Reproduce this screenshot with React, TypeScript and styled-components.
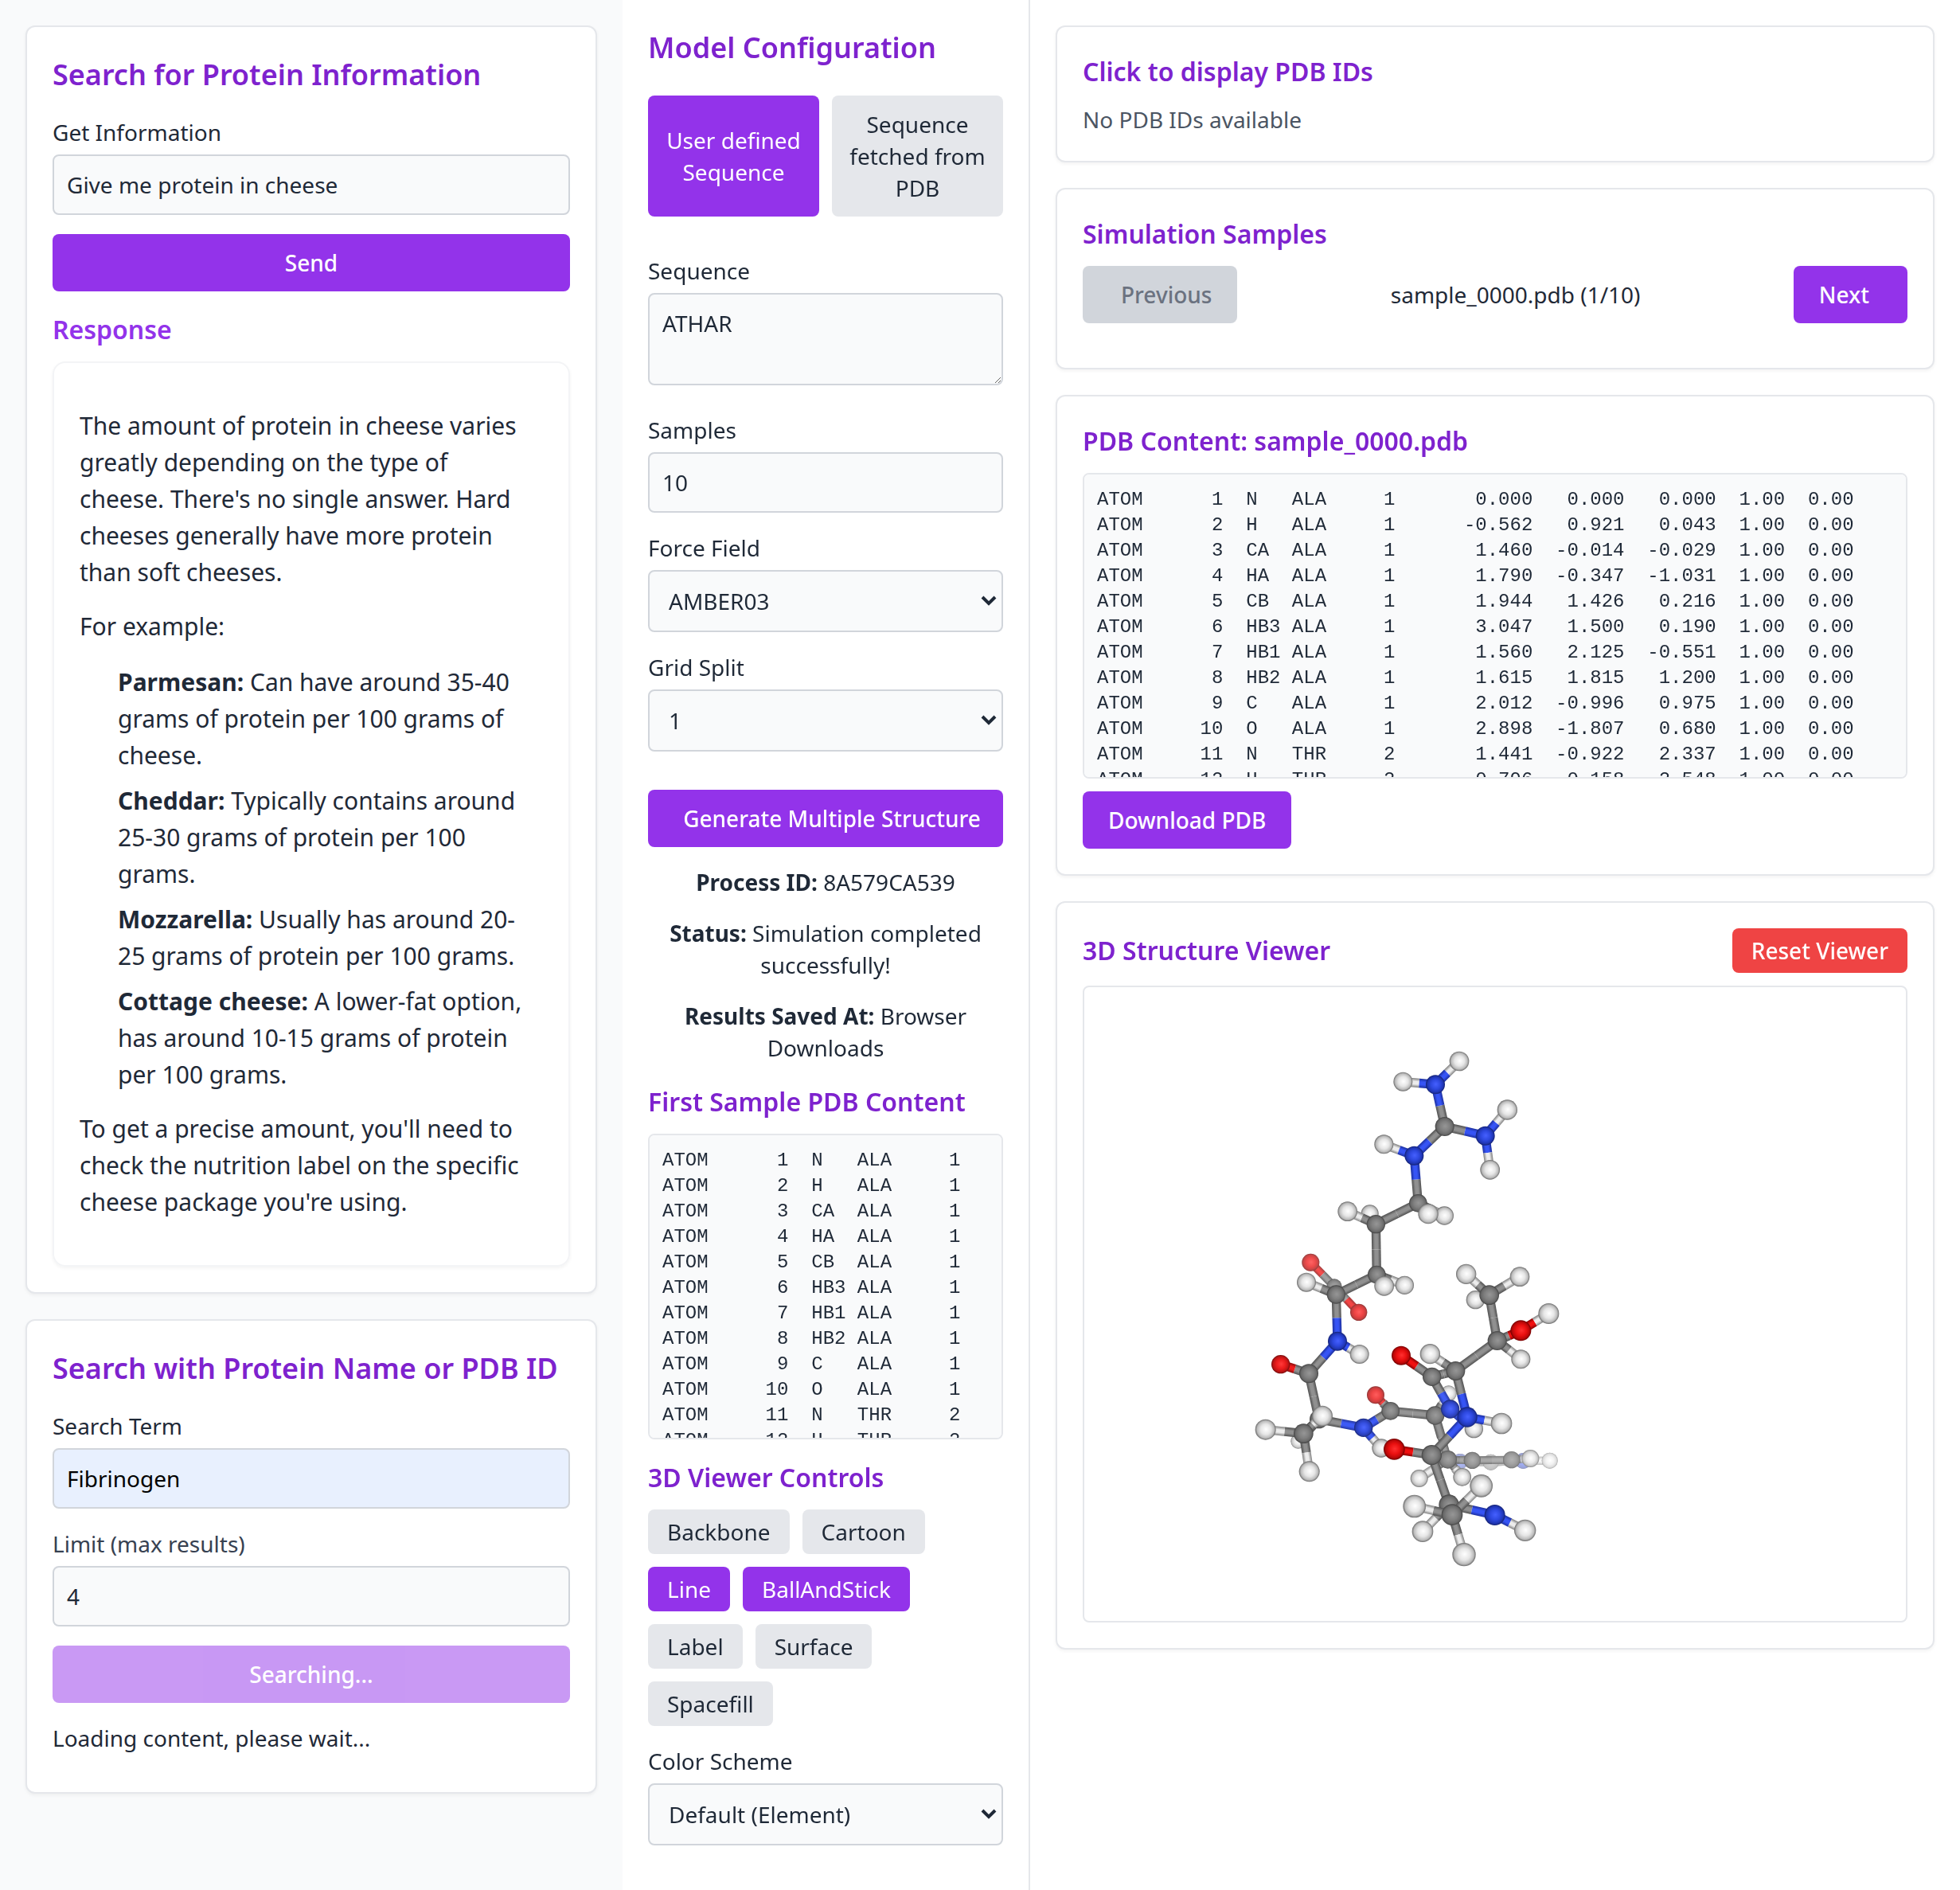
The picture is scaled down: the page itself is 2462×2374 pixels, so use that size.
import React, { useState } from "react";
import styled, { createGlobalStyle, css } from "styled-components";

const color = {
  ink: "#1f2937",
  inkSoft: "#374151",
  muted: "#4b5563",
  purple: "#9333ea",
  purpleDark: "#7e22ce",
  line: "#e5e7eb",
  lineStrong: "#d1d5db",
  lineSoft: "#f3f4f6",
  surface: "#f9fafb",
  red: "#ef4444",
};

const GlobalStyle = createGlobalStyle`
  *, *::before, *::after { box-sizing: border-box; }
  body {
    margin: 0;
    background: #fff;
    color: ${color.ink};
    font-family: "Noto Sans", "Open Sans", sans-serif;
    font-size: 28px;
    line-height: 40px;
  }
  h2, h3, p, ul, pre { margin: 0; padding: 0; }
  button, input, textarea, select { font: inherit; color: inherit; margin: 0; }
`;

const Page = styled.div`
  display: grid;
  grid-template-columns: minmax(0, 391fr) minmax(0, 256fr) minmax(0, 584fr);
  min-height: 100vh;
`;

const Column = styled.div<{ $tone?: "tinted" | "ruled" }>`
  padding: 32px;
  ${(p) => p.$tone === "tinted" && css`background: ${color.surface};`}
  ${(p) => p.$tone === "ruled" && css`border-right: 2px solid ${color.line};`}
`;

const CardColumn = styled(Column)`
  display: flex;
  flex-direction: column;
  gap: 32px;
`;

const Card = styled.section`
  padding: 32px;
  background: #fff;
  border: 2px solid ${color.line};
  border-radius: 12px;
  box-shadow: 0 2px 4px rgba(0, 0, 0, 0.05);
`;

const Title = styled.h2`
  margin-bottom: 24px;
  font-size: 36px;
  line-height: 56px;
  font-weight: 600;
  color: ${color.purpleDark};
`;

const Subtitle = styled.h3<{ $bright?: boolean }>`
  margin-bottom: 16px;
  font-size: 32px;
  line-height: 48px;
  font-weight: 600;
  color: ${(p) => (p.$bright ? color.purple : color.purpleDark)};
`;

const Field = styled.div`
  margin-bottom: 24px;
`;

const Label = styled.label<{ $soft?: boolean }>`
  display: block;
  margin-bottom: 8px;
  color: ${(p) => (p.$soft ? color.inkSoft : color.ink)};
`;

const boxed = css`
  display: block;
  width: 100%;
  border: 2px solid ${color.lineStrong};
  border-radius: 8px;
  background: ${color.surface};
  outline: none;
`;

const TextInput = styled.input<{ $filled?: boolean }>`
  ${boxed}
  height: 76px;
  padding: 16px;
  appearance: textfield;
  ${(p) => p.$filled && css`background: #e8f0fe; color: #000;`}
  &::-webkit-inner-spin-button { display: none; }
`;

const TextArea = styled.textarea`
  ${boxed}
  height: 116px;
  padding: 16px;
  resize: vertical;
`;

const SequenceField = styled(Field)`
  margin-bottom: 36px;
`;

const SelectWrap = styled.div`
  display: grid;
  grid-template-columns: 1fr auto;
  align-items: center;
`;

const SelectBox = styled.select`
  ${boxed}
  grid-area: 1 / 1 / 2 / 3;
  height: 78px;
  padding: 0 40px 0 24px;
  appearance: none;
`;

const Chevron = styled.svg`
  grid-area: 1 / 2;
  width: 20px;
  height: 14px;
  margin-right: 8px;
  pointer-events: none;
`;

const Button = styled.button<{ $wide?: boolean }>`
  display: ${(p) => (p.$wide ? "flex" : "inline-flex")};
  width: ${(p) => (p.$wide ? "100%" : "auto")};
  align-items: center;
  justify-content: center;
  padding: 16px ${(p) => (p.$wide ? "16px" : "32px")};
  border: 0;
  border-radius: 8px;
  background: ${color.purple};
  color: #fff;
  font-weight: 500;
  cursor: pointer;
  &:disabled { opacity: 0.5; cursor: default; }
`;

const PagerButton = styled(Button)`
  &:disabled {
    opacity: 1;
    background: ${color.lineStrong};
    color: #6b7280;
  }
`;

const IconSlot = styled.i`
  width: 16px;
`;

const ToggleButton = styled.button<{ $on: boolean }>`
  padding: 8px 24px;
  border: 0;
  border-radius: 8px;
  background: ${(p) => (p.$on ? color.purple : color.line)};
  color: ${(p) => (p.$on ? "#fff" : color.ink)};
  cursor: pointer;
`;

const ModeButton = styled(ToggleButton)`
  flex: 1;
  padding: 16px;
`;

const ResetButton = styled(Button)`
  padding: 8px 24px;
  background: ${color.red};
`;

const ModeRow = styled.div`
  display: flex;
  gap: 16px;
  margin: 32px 0 48px;
`;

const ToggleRow = styled.div`
  display: flex;
  flex-wrap: wrap;
  gap: 16px;
  margin-bottom: 24px;
`;

const SpreadRow = styled.div`
  display: flex;
  align-items: center;
  justify-content: space-between;
`;

const PagerRow = styled(SpreadRow)`
  margin-bottom: 24px;
`;

const ViewerHead = styled(SpreadRow)`
  margin-bottom: 16px;
  ${Subtitle} { margin-bottom: 0; }
`;

const ResponseHead = styled(Subtitle)`
  margin-top: 24px;
`;

const Answer = styled.article`
  padding: 56px 48px 56px 32px;
  border: 2px solid ${color.lineSoft};
  border-radius: 16px;
  box-shadow: 0 2px 4px rgba(0, 0, 0, 0.05);
  font-size: 30px;
  line-height: 46px;
`;

const AnswerText = styled.p`
  & + & { margin-top: 22px; }
  ul + & { margin-top: 22px; }
`;

const AnswerList = styled.ul`
  && { margin-top: 24px; }
  padding-left: 48px;
  list-style: none;
  li + li { margin-top: 11px; }
`;

const Loading = styled.p`
  margin: 24px 0 16px;
`;

const Results = styled.div`
  display: grid;
  gap: 24px;
  margin: 24px 0;
  text-align: center;
`;

const Submit = styled.div`
  margin-top: 48px;
`;

const Listing = styled.pre`
  height: 384px;
  padding: 16px;
  overflow: auto;
  scrollbar-width: none;
  border: 2px solid ${color.line};
  border-radius: 8px;
  background: ${color.surface};
  font-family: "Liberation Mono", "Courier New", monospace;
  font-size: 24px;
  line-height: 32px;
`;

const ListingGap = styled.div`
  margin-bottom: 24px;
`;

const DownloadRow = styled.div`
  display: flex;
  margin-top: 16px;
`;

const Empty = styled.p`
  color: ${color.muted};
`;

const Stage = styled.div`
  height: 800px;
  border: 2px solid ${color.line};
  border-radius: 8px;
  svg { display: block; width: 100%; height: 100%; }
`;

/* ---------- PDB data ---------- */

type Row = [string, string, number, string, string, string];

const rows: Row[] = [
  ["N", "ALA", 1, "0.000", "0.000", "0.000"],
  ["H", "ALA", 1, "-0.562", "0.921", "0.043"],
  ["CA", "ALA", 1, "1.460", "-0.014", "-0.029"],
  ["HA", "ALA", 1, "1.790", "-0.347", "-1.031"],
  ["CB", "ALA", 1, "1.944", "1.426", "0.216"],
  ["HB3", "ALA", 1, "3.047", "1.500", "0.190"],
  ["HB1", "ALA", 1, "1.560", "2.125", "-0.551"],
  ["HB2", "ALA", 1, "1.615", "1.815", "1.200"],
  ["C", "ALA", 1, "2.012", "-0.996", "0.975"],
  ["O", "ALA", 1, "2.898", "-1.807", "0.680"],
  ["N", "THR", 2, "1.441", "-0.922", "2.337"],
  ["H", "THR", 2, "0.796", "0.158", "2.548"],
];

const pdb = rows
  .map(
    ([name, res, seq, x, y, z], i) =>
      "ATOM  " +
      String(i + 1).padStart(5) +
      "  " +
      name.padEnd(4) +
      res +
      String(seq).padStart(6) +
      " ".repeat(4) +
      x.padStart(8) +
      y.padStart(8) +
      z.padStart(8) +
      "  1.00  0.00"
  )
  .join("\n");

/* ---------- molecule drawing ---------- */

type Element = "H" | "C" | "N" | "O";

// id: [element, x, y, radius, depth, fog]
const atoms: Record<string, [Element, number, number, number, number, number]> = {
  h1: ["H", 819, 99, 37, 6, 0],
  n1: ["N", 729, 187, 36, 6, 0],
  h2: ["H", 607, 176, 36, 5, 0],
  c1: ["C", 764, 345, 36, 5, 0],
  n2: ["N", 917, 380, 36, 6, 0],
  h3: ["H", 1000, 282, 38, 6, 0],
  h4: ["H", 935, 508, 37, 6, 0],
  n3: ["N", 649, 455, 36, 6, 0],
  h5: ["H", 535, 412, 36, 5, 0],
  c2: ["C", 664, 634, 34, 4, 0],
  h6: ["H", 702, 674, 38, 6, 0],
  h7: ["H", 763, 681, 35, 4.6, 0],
  c3: ["C", 505, 713, 35, 5, 0],
  h8: ["H", 398, 665, 37, 5.5, 0],
  h9: ["H", 482, 673, 33, 3, 0],
  c4: ["C", 508, 903, 34, 4, 0],
  h10: ["H", 536, 946, 37, 6, 0],
  h11: ["H", 613, 943, 35, 4.6, 0],
  c5: ["C", 355, 978, 35, 6, 0],
  c6: ["C", 348, 948, 29, 3, 0.15],
  h12: ["H", 243, 932, 36, 5, 0],
  o1: ["O", 259, 857, 33, 2, 0.25],
  o2: ["O", 440, 1045, 32, 2, 0.22],
  c7: ["C", 932, 980, 37, 5, 0],
  h13: ["H", 845, 901, 38, 6, 0],
  h14: ["H", 1047, 911, 37, 5, 0],
  h15: ["H", 880, 998, 35, 4, 0],
  c8: ["C", 962, 1152, 36, 6, 0],
  o3: ["O", 1051, 1114, 39, 7, 0],
  h16: ["H", 1156, 1050, 39, 7, 0],
  h17: ["H", 1051, 1222, 36, 5, 0],
  c9: ["C", 805, 1266, 36, 5.5, 0],
  h18: ["H", 709, 1202, 38, 6, 0],
  c10: ["C", 716, 1288, 35, 6, 0],
  o4: ["O", 600, 1208, 36, 7, 0],
  n4: ["N", 785, 1410, 35, 5, 0.05],
  n5: ["N", 849, 1440, 38, 7, 0],
  h19: ["H", 978, 1464, 40, 7, 0],
  h20: ["H", 874, 1484, 35, 4, 0],
  h21: ["H", 779, 1351, 30, 3, 0.2],
  c11: ["C", 728, 1434, 35, 4, 0.05],
  c12: ["C", 560, 1417, 34, 4, 0.05],
  o5: ["O", 504, 1357, 33, 3, 0.22],
  n6: ["N", 458, 1480, 35, 5, 0.04],
  h22: ["H", 525, 1557, 35, 4, 0],
  c13: ["C", 290, 1448, 35, 4, 0],
  c14: ["C", 232, 1502, 37, 6, 0],
  h23: ["H", 303, 1436, 39, 7, 0],
  h24: ["H", 89, 1487, 39, 7, 0],
  h25: ["H", 254, 1645, 39, 7, 0],
  h26: ["H", 212, 1531, 28, 3, 0.2],
  c15: ["C", 252, 1276, 36, 5, 0],
  o6: ["O", 146, 1241, 35, 5, 0.05],
  n7: ["N", 360, 1154, 36, 6, 0],
  h27: ["H", 443, 1203, 36, 6, 0],
  c16: ["C", 715, 1583, 38, 7, 0],
  o7: ["O", 574, 1561, 40, 8, 0],
  c17: ["C", 780, 1770, 38, 6.8, 0],
  c18: ["C", 792, 1808, 40, 9, 0],
  h28: ["H", 902, 1699, 43, 10, 0],
  h29: ["H", 650, 1776, 43, 10, 0],
  h30: ["H", 681, 1871, 40, 8, 0],
  h31: ["H", 837, 1958, 44, 10, 0],
  n8: ["N", 953, 1809, 39, 8, 0],
  h32: ["H", 1067, 1867, 41, 8, 0],
  c19: ["C", 776, 1600, 34, 3.2, 0.12],
  h33: ["H", 668, 1671, 33, 3, 0.08],
  h34: ["H", 830, 1666, 34, 4, 0.04],
  c20: ["C", 868, 1603, 32, 2.5, 0.22],
  n9: ["N", 823, 1607, 29, 1, 0.6],
  c21: ["C", 938, 1610, 30, 1, 0.6],
  c22: ["C", 1016, 1601, 32, 2.5, 0.28],
  n10: ["N", 1060, 1605, 30, 1, 0.55],
  h35: ["H", 1087, 1596, 33, 3, 0.2],
  h36: ["H", 1160, 1604, 30, 1, 0.5],
};

const bonds =
  "h1-n1 h2-n1 n1-c1 c1-n2 n2-h3 n2-h4 c1-n3 n3-h5 n3-c2 c2-h6 c2-h7 c2-c3 c3-h8 c3-h9 c3-c4 c4-h10 c4-h11 c4-c5 c5-h12 c5-c6 c6-o1 c6-o2 c5-n7 n7-h27 n7-c15 c15-o6 c15-c13 c13-n6 n6-h22 n6-c12 c12-o5 c12-c11 c11-n4 c11-h21 c11-c19 n4-c10 n4-h20 c10-o4 c10-c9 c9-h18 c9-c8 c9-n5 n5-h19 n5-c16 c16-o7 c16-c17 c17-n8 n8-h32 c17-h30 c17-c18 c18-h28 c18-h29 c18-h31 c8-o3 o3-h16 c8-h17 c8-c7 c7-h13 c7-h14 c7-h15 c13-c14 c14-h23 c14-h24 c14-h25 c13-h26 c19-h33 c19-h34 c19-c20 c19-n9 n9-c21 c21-n10 c20-c22 c22-h35 n10-h36".split(
    " "
  );

const shade: Record<Element, { ball: string[]; rod: string[] }> = {
  H: { ball: ["#ffffff", "#e6e6e6", "#bcbcbc", "#6c6c6c"], rod: ["#808080", "#ececec"] },
  C: { ball: ["#969696", "#808080", "#6a6a6a", "#444444"], rod: ["#505050", "#909090"] },
  N: { ball: ["#4560ff", "#2d48df", "#2036b4", "#142272"], rod: ["#1c2f9e", "#3654f5"] },
  O: { ball: ["#ff3030", "#ea1010", "#bb0808", "#700000"], rod: ["#860000", "#f01010"] },
};

interface Piece {
  depth: number;
  node: React.ReactElement;
}

function rod(id: string, from: string, to: string): Piece {
  const [kind, x1, y1, , depth, fog] = atoms[from];
  const [, x2, y2] = atoms[to];
  const angle = (Math.atan2(y2 - y1, x2 - x1) * 180) / Math.PI;
  const length = Math.hypot(x2 - x1, y2 - y1) / 2;
  const half = fog > 0.1 ? 15 : 17;
  const shape = { x: 0, y: -half, width: length, height: half * 2 };
  return {
    depth: depth - 0.1,
    node: (
      <g key={id} transform={`translate(${x1} ${y1}) rotate(${angle})`}>
        <rect {...shape} fill={`url(#rod-${kind})`} />
        {fog > 0 && <rect {...shape} fill="#fff" opacity={fog} />}
      </g>
    ),
  };
}

function ball(id: string): Piece {
  const [kind, cx, cy, r, depth, fog] = atoms[id];
  return {
    depth,
    node: (
      <g key={id}>
        <circle cx={cx} cy={cy} r={r} fill={`url(#ball-${kind})`} />
        {fog > 0 && <circle cx={cx} cy={cy} r={r} fill="#fff" opacity={fog} />}
      </g>
    ),
  };
}

const pieces: Piece[] = [
  ...bonds.flatMap((bond) => {
    const [a, b] = bond.split("-");
    return [rod(`${bond}-a`, a, b), rod(`${bond}-b`, b, a)];
  }),
  ...Object.keys(atoms).map(ball),
].sort((a, b) => a.depth - b.depth);

function Molecule() {
  return (
    <svg viewBox="-594 -180 3096 2388" role="img" aria-label="Ball and stick model">
      <defs>
        {(Object.keys(shade) as Element[]).map((kind) => {
          const { ball: b, rod: r } = shade[kind];
          return (
            <React.Fragment key={kind}>
              <radialGradient id={`ball-${kind}`} cx="0.5" cy="0.5" r="0.5" fx="0.53" fy="0.48">
                <stop offset="0" stopColor={b[0]} />
                <stop offset="0.5" stopColor={b[1]} />
                <stop offset="0.82" stopColor={b[2]} />
                <stop offset="1" stopColor={b[3]} />
              </radialGradient>
              <linearGradient id={`rod-${kind}`} x1="0" y1="0" x2="0" y2="1">
                <stop offset="0" stopColor={r[0]} />
                <stop offset="0.35" stopColor={r[1]} />
                <stop offset="0.65" stopColor={r[1]} />
                <stop offset="1" stopColor={r[0]} />
              </linearGradient>
            </React.Fragment>
          );
        })}
      </defs>
      {pieces.map((p) => p.node)}
    </svg>
  );
}

/* ---------- form parts ---------- */

function Select({ id, label, options }: { id: string; label: string; options: string[] }) {
  return (
    <Field>
      <Label htmlFor={id}>{label}</Label>
      <SelectWrap>
        <SelectBox id={id}>
          {options.map((o) => (
            <option key={o}>{o}</option>
          ))}
        </SelectBox>
        <Chevron viewBox="0 0 20 14" aria-hidden="true">
          <path d="M2 2 L10 10 L18 2" fill="none" stroke={color.ink} strokeWidth="4" />
        </Chevron>
      </SelectWrap>
    </Field>
  );
}

const cheeses = [
  ["Parmesan:", "Can have around 35-40 grams of protein per 100 grams of cheese."],
  ["Cheddar:", "Typically contains around 25-30 grams of protein per 100 grams."],
  ["Mozzarella:", "Usually has around 20-25 grams of protein per 100 grams."],
  ["Cottage cheese:", "A lower-fat option, has around 10-15 grams of protein per 100 grams."],
];

const styles = ["Backbone", "Cartoon", "Line", "BallAndStick", "Label", "Surface", "Spacefill"];

export default function App() {
  const [active, setActive] = useState(["Line", "BallAndStick"]);
  const [mode, setMode] = useState("user");

  const toggle = (name: string) =>
    setActive((list) => (list.includes(name) ? list.filter((n) => n !== name) : [...list, name]));

  return (
    <>
      <GlobalStyle />
      <Page>
        <CardColumn as="aside" $tone="tinted">
          <Card>
            <Title>Search for Protein Information</Title>
            <Field>
              <Label htmlFor="question">Get Information</Label>
              <TextInput id="question" type="text" defaultValue="Give me protein in cheese" />
            </Field>
            <Button type="button" $wide>Send</Button>
            <ResponseHead $bright>Response</ResponseHead>
            <Answer>
              <AnswerText>
                The amount of protein in cheese varies greatly depending on the type of cheese. There's no
                single answer. Hard cheeses generally have more protein than soft cheeses.
              </AnswerText>
              <AnswerText>For example:</AnswerText>
              <AnswerList>
                {cheeses.map(([name, text]) => (
                  <li key={name}>
                    <strong>{name}</strong> {text}
                  </li>
                ))}
              </AnswerList>
              <AnswerText>
                To get a precise amount, you'll need to check the nutrition label on the specific cheese
                package you're using.
              </AnswerText>
            </Answer>
          </Card>

          <Card>
            <Title>Search with Protein Name or PDB ID</Title>
            <Field>
              <Label htmlFor="term">Search Term</Label>
              <TextInput id="term" type="text" defaultValue="Fibrinogen" $filled />
            </Field>
            <Field>
              <Label htmlFor="limit" $soft>Limit (max results)</Label>
              <TextInput id="limit" type="number" defaultValue="4" />
            </Field>
            <Button type="button" $wide disabled>Searching...</Button>
            <Loading>Loading content, please wait...</Loading>
          </Card>
        </CardColumn>

        <Column as="section" $tone="ruled">
          <Title>Model Configuration</Title>
          <ModeRow>
            <ModeButton type="button" $on={mode === "user"} onClick={() => setMode("user")}>
              User defined Sequence
            </ModeButton>
            <ModeButton type="button" $on={mode === "pdb"} onClick={() => setMode("pdb")}>
              Sequence fetched from PDB
            </ModeButton>
          </ModeRow>
          <SequenceField>
            <Label htmlFor="sequence">Sequence</Label>
            <TextArea id="sequence" defaultValue="ATHAR" />
          </SequenceField>
          <Field>
            <Label htmlFor="samples">Samples</Label>
            <TextInput id="samples" type="number" defaultValue="10" />
          </Field>
          <Select id="force" label="Force Field" options={["AMBER03"]} />
          <Select id="grid" label="Grid Split" options={["1"]} />
          <Submit>
            <Button type="button" $wide>
              <IconSlot />
              Generate Multiple Structure
            </Button>
          </Submit>
          <Results>
            <p><strong>Process ID:</strong> 8A579CA539</p>
            <p><strong>Status:</strong> Simulation completed successfully!</p>
            <p><strong>Results Saved At:</strong> Browser Downloads</p>
          </Results>
          <Subtitle>First Sample PDB Content</Subtitle>
          <ListingGap>
            <Listing>{pdb}</Listing>
          </ListingGap>
          <Subtitle>3D Viewer Controls</Subtitle>
          <ToggleRow>
            {styles.map((name) => (
              <ToggleButton
                key={name}
                type="button"
                $on={active.includes(name)}
                aria-pressed={active.includes(name)}
                onClick={() => toggle(name)}
              >
                {name}
              </ToggleButton>
            ))}
          </ToggleRow>
          <Select id="scheme" label="Color Scheme" options={["Default (Element)"]} />
        </Column>

        <CardColumn as="main">
          <Card>
            <Subtitle>Click to display PDB IDs</Subtitle>
            <Empty>No PDB IDs available</Empty>
          </Card>
          <Card>
            <Subtitle>Simulation Samples</Subtitle>
            <PagerRow>
              <PagerButton type="button" disabled>
                <IconSlot />
                Previous
              </PagerButton>
              <span>sample_0000.pdb (1/10)</span>
              <PagerButton type="button">
                Next
                <IconSlot />
              </PagerButton>
            </PagerRow>
          </Card>
          <Card>
            <Subtitle>PDB Content: sample_0000.pdb</Subtitle>
            <Listing>{pdb}</Listing>
            <DownloadRow>
              <Button type="button">Download PDB</Button>
            </DownloadRow>
          </Card>
          <Card>
            <ViewerHead>
              <Subtitle>3D Structure Viewer</Subtitle>
              <ResetButton type="button">Reset Viewer</ResetButton>
            </ViewerHead>
            <Stage>
              <Molecule />
            </Stage>
          </Card>
        </CardColumn>
      </Page>
    </>
  );
}
